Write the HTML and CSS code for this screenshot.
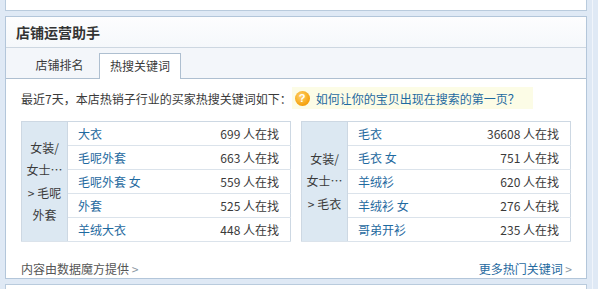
FILE: index.html
```html
<!DOCTYPE html>
<html lang="zh">
<head>
<meta charset="utf-8">
<link rel="stylesheet" href="styles.css">
</head>
<body>
<div class="page">
  <div class="col">
    <div class="top-panel"></div>
    <div class="panel">
      <div class="panel-head">店铺运营助手</div>
      <div class="tabs">
        <div class="tab">店铺排名</div>
        <div class="tab active">热搜关键词</div>
      </div>
      <div class="panel-body">
        <div class="intro">
          <span class="intro-text">最近7天，本店热销子行业的买家热搜关键词如下：</span>
          <a class="hint"><span class="qicon">?</span>如何让你的宝贝出现在搜索的第一页？</a>
        </div>
        <div class="tables">
          <table class="kw">
            <tr><td class="cat" rowspan="5">女装/<br>女士…<br>&gt; 毛呢<br>外套</td><td class="word">大衣</td><td class="num">699 人在找</td></tr>
            <tr><td class="word">毛呢外套</td><td class="num">663 人在找</td></tr>
            <tr><td class="word">毛呢外套 女</td><td class="num">559 人在找</td></tr>
            <tr><td class="word">外套</td><td class="num">525 人在找</td></tr>
            <tr><td class="word">羊绒大衣</td><td class="num">448 人在找</td></tr>
          </table>
          <table class="kw">
            <tr><td class="cat" rowspan="5">女装/<br>女士…<br>&gt; 毛衣</td><td class="word">毛衣</td><td class="num">36608 人在找</td></tr>
            <tr><td class="word">毛衣 女</td><td class="num">751 人在找</td></tr>
            <tr><td class="word">羊绒衫</td><td class="num">620 人在找</td></tr>
            <tr><td class="word">羊绒衫 女</td><td class="num">276 人在找</td></tr>
            <tr><td class="word">哥弟开衫</td><td class="num">235 人在找</td></tr>
          </table>
        </div>
        <div class="foot">
          <span class="source">内容由数据魔方提供 <span class="gt">&gt;</span></span>
          <a class="more">更多热门关键词 <span class="gt">&gt;</span></a>
        </div>
      </div>
    </div>
    <div class="next-panel"></div>
  </div>
  <div class="side"></div>
</div>
</body>
</html>
```

FILE: styles.css
```css
* { box-sizing: border-box; }
html, body { margin: 0; padding: 0; }
body {
  background: #dfe9f5;
  font-family: "Noto Sans CJK SC", "Liberation Sans", sans-serif;
  font-size: 12px;
  color: #3a3a3a;
  width: 598px;
  height: 289px;
  overflow: hidden;
}
.page {
  display: flex;
  padding-left: 5px;
}
.col {
  width: 582px;
  display: flex;
  flex-direction: column;
}
.side {
  width: 6px;
  border-right: 1px solid #f1f5fb;
  height: 289px;
}
.top-panel {
  height: 11px;
  background: #fff;
  border: 1px solid #b9cbdd;
  border-top: none;
}
.panel {
  margin-top: 5px;
  height: 263px;
  border: 1px solid #b3c6da;
  background: #fff;
  display: flex;
  flex-direction: column;
}
.panel-head {
  height: 31px;
  line-height: 31px;
  padding-left: 10px;
  font-size: 14px;
  font-weight: bold;
  color: #333;
  background: linear-gradient(#fdfdfe, #f5f8fb);
  border-bottom: 1px solid #cdd7e1;
}
.tabs {
  height: 32px;
  display: flex;
  align-items: flex-end;
  padding-left: 14px;
  background: #f3f6fa;
  border-bottom: 1px solid #aebfd0;
}
.tab {
  height: 25px;
  line-height: 24px;
  width: 79px;
  text-align: center;
  font-size: 12px;
}
.tab.active {
  width: 82px;
  background: #fff;
  border: 1px solid #aebfd0;
  border-bottom: none;
  margin-bottom: -1px;
  height: 26px;
}
.panel-body {
  flex: 1;
  padding: 8px 15px 0 15px;
  display: flex;
  flex-direction: column;
}
.intro {
  height: 22px;
  display: flex;
  align-items: center;
}
.intro-text { white-space: nowrap; }
.hint {
  display: flex;
  align-items: center;
  height: 22px;
  width: 241px;
  padding-left: 3px;
  background: #fcfce6;
  color: #1f6aa0;
  white-space: nowrap;
}
.qicon {
  width: 15px;
  height: 15px;
  border-radius: 50%;
  background: radial-gradient(circle at 40% 35%, #ffd36a, #f5a10d 70%, #e58a00);
  color: #fff;
  font-weight: bold;
  font-size: 11px;
  line-height: 15px;
  text-align: center;
  margin-right: 6px;
  font-family: "Liberation Sans", sans-serif;
}
.tables {
  margin-top: 12px;
  display: flex;
  gap: 10px;
}
.kw {
  width: 271px;
  border-collapse: collapse;
  border: 1px solid #cdd8e3;
}
.kw td {
  height: 24px;
  padding: 0;
  border-bottom: 1px solid #dbe3eb;
  white-space: nowrap;
}
.kw .cat {
  width: 46px;
  background: #dce8f2;
  text-align: center;
  line-height: 22.5px;
  vertical-align: middle;
  border-right: 1px solid #cdd8e3;
}
.kw .word {
  padding-left: 10px;
  color: #1f6aa0;
}
.kw .num {
  text-align: right;
  padding-right: 11px;
}
.foot {
  margin-top: 16px;
  display: flex;
  justify-content: space-between;
  width: 551px;
  height: 20px;
  align-items: center;
}
.source { color: #555; }
.more { color: #1f6aa0; }
.gt { color: #8a97a3; }
.next-panel {
  margin-top: 5px;
  height: 10px;
  background: #fff;
  border: 1px solid #b9cbdd;
  border-bottom: none;
}
```
